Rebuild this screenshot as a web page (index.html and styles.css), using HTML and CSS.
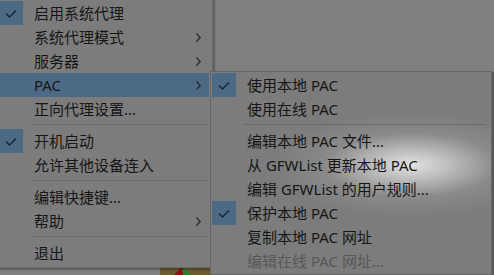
FILE: index.html
```html
<!DOCTYPE html>
<html>
<head>
<meta charset="utf-8">
<link rel="stylesheet" href="styles.css">
</head>
<body>
<div class="desk">
  <div class="tray">
    <svg width="30" height="10" viewBox="0 0 30 10"><path d="M6 10 L14 1 L15 10 Z" fill="#8a1414"/><path d="M15 1 L22 10 L17 10 L15 5 Z" fill="#1d8a2a"/></svg>
  </div>

  <div class="menu main">
    <div class="item"><span class="chk on"><svg width="12" height="9" viewBox="0 0 12 9"><path d="M1 4.5 L4.5 8 L11 1.5" fill="none" stroke="#1a2430" stroke-width="1.4"/></svg></span><span class="label">启用系统代理</span></div>
    <div class="item"><span class="chk"></span><span class="label">系统代理模式</span><span class="arr"><svg width="5" height="9" viewBox="0 0 5 9"><path d="M0.5 0.5 L4.3 4.5 L0.5 8.5" fill="none" stroke="#222" stroke-width="1.1"/></svg></span></div>
    <div class="item"><span class="chk"></span><span class="label">服务器</span><span class="arr"><svg width="5" height="9" viewBox="0 0 5 9"><path d="M0.5 0.5 L4.3 4.5 L0.5 8.5" fill="none" stroke="#222" stroke-width="1.1"/></svg></span></div>
    <div class="item hi"><span class="chk"></span><span class="label">PAC</span><span class="arr"><svg width="5" height="9" viewBox="0 0 5 9"><path d="M0.5 0.5 L4.3 4.5 L0.5 8.5" fill="none" stroke="#222" stroke-width="1.1"/></svg></span></div>
    <div class="item"><span class="chk"></span><span class="label">正向代理设置...</span></div>
    <div class="sep"></div>
    <div class="item"><span class="chk on"><svg width="12" height="9" viewBox="0 0 12 9"><path d="M1 4.5 L4.5 8 L11 1.5" fill="none" stroke="#1a2430" stroke-width="1.4"/></svg></span><span class="label">开机启动</span></div>
    <div class="item"><span class="chk"></span><span class="label">允许其他设备连入</span></div>
    <div class="sep"></div>
    <div class="item"><span class="chk"></span><span class="label">编辑快捷键...</span></div>
    <div class="item"><span class="chk"></span><span class="label">帮助</span><span class="arr"><svg width="5" height="9" viewBox="0 0 5 9"><path d="M0.5 0.5 L4.3 4.5 L0.5 8.5" fill="none" stroke="#222" stroke-width="1.1"/></svg></span></div>
    <div class="sep"></div>
    <div class="item"><span class="chk"></span><span class="label">退出</span></div>
  </div>

  <div class="menu sub">
    <div class="item"><span class="chk on"><svg width="12" height="9" viewBox="0 0 12 9"><path d="M1 4.5 L4.5 8 L11 1.5" fill="none" stroke="#1a2430" stroke-width="1.4"/></svg></span><span class="label">使用本地 PAC</span></div>
    <div class="item"><span class="chk"></span><span class="label">使用在线 PAC</span></div>
    <div class="sep"></div>
    <div class="item"><span class="chk"></span><span class="label">编辑本地 PAC 文件...</span></div>
    <div class="item"><span class="chk"></span><span class="label">从 GFWList 更新本地 PAC</span></div>
    <div class="item"><span class="chk"></span><span class="label">编辑 GFWList 的用户规则...</span></div>
    <div class="item"><span class="chk on"><svg width="12" height="9" viewBox="0 0 12 9"><path d="M1 4.5 L4.5 8 L11 1.5" fill="none" stroke="#1a2430" stroke-width="1.4"/></svg></span><span class="label">保护本地 PAC</span></div>
    <div class="item"><span class="chk"></span><span class="label">复制本地 PAC 网址</span></div>
    <div class="item dis"><span class="chk"></span><span class="label">编辑在线 PAC 网址...</span></div>
  </div>
</div>
</body>
</html>
```

FILE: styles.css
```css
html, body {
  margin: 0;
  padding: 0;
  width: 494px;
  height: 275px;
  overflow: hidden;
  background: #808080;
  font-family: "Noto Sans", "Noto Sans CJK SC", sans-serif;
  font-size: 15px;
  color: #161616;
}

.desk {
  position: relative;
  width: 494px;
  height: 275px;
}

.tray {
  position: absolute;
  left: 160px;
  top: 265px;
  width: 50px;
  height: 10px;
  background: #6b5b30;
  display: flex;
  justify-content: center;
  align-items: flex-end;
}
.tray svg { margin-left: -4px; }

.menu {
  position: absolute;
  background: #7c7c7c;
  border: 1px solid #6a6a6a;
  box-sizing: border-box;
  display: flex;
  flex-direction: column;
}

.main {
  left: -3px;
  top: -2px;
  width: 216px;
  padding: 2px 3px 2px 1px;
  box-shadow: 2px 2px 1px rgba(0,0,0,0.25);
}

.sub {
  left: 210px;
  top: 71px;
  width: 282px;
  padding: 1px 3px 1px 1px;
  border-color: #666;
  box-shadow: 2px 1px 1px rgba(0,0,0,0.3);
  background:
    radial-gradient(ellipse 140px 52px at 200px 93px, rgba(232,232,232,0.95) 0%, rgba(215,215,215,0.7) 28%, rgba(170,170,170,0.3) 62%, rgba(124,124,124,0) 100%),
    #7c7c7c;
}

.item {
  height: 24px;
  display: flex;
  align-items: center;
  position: relative;
  white-space: nowrap;
}

.item.hi { background: #4c6986; }

.chk {
  width: 24px;
  height: 24px;
  flex: none;
  display: flex;
  align-items: center;
  justify-content: center;
}
.chk.on { background: #4c6986; }

.label {
  margin-left: 11px;
  line-height: 24px;
}

.dis .label { color: #575757; }

.arr {
  margin-left: auto;
  margin-right: 8px;
  display: flex;
  align-items: center;
}

.sep {
  height: 8px;
  position: relative;
  flex: none;
}
.sep::after {
  content: "";
  position: absolute;
  left: 31px;
  right: 2px;
  top: 3px;
  height: 1px;
  background: #6c6c6c;
}
```
